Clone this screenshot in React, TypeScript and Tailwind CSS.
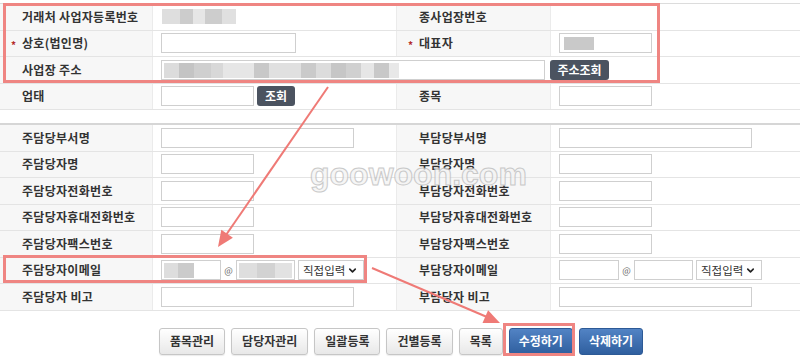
import React from "react";
import { ChevronDown } from "lucide-react";

type Seg = [number, string];

const addrBlur: Seg[] = [
  [15, "#dcdcdc"], [15, "#c4c4c4"], [17, "#cfcfcf"], [12, "#d8d8d8"], [31, "#e6e6e6"],
  [15, "#c8c8c8"], [32, "#e0e0e0"], [15, "#cacaca"], [15, "#dcdcdc"], [15, "#c6c6c6"],
  [15, "#d0d0d0"], [13, "#e6e6e6"], [15, "#c8c8c8"], [10, "#e8e8e8"],
];
const bizBlur: Seg[] = [[18, "#dedede"], [13, "#cccccc"], [12, "#e6e6e6"], [17, "#cdcdcd"], [14, "#e0e0e0"]];
const mail1Blur: Seg[] = [[14, "#dddddd"], [16, "#cbcbcb"]];
const mail2Blur: Seg[] = [[18, "#dedede"], [18, "#d2d2d2"], [17, "#e2e2e2"]];

function Blur({ segs, className = "" }: { segs: Seg[]; className?: string }) {
  return (
    <div className={`flex ${className}`}>
      {segs.map(([w, c], i) => (
        <div key={i} style={{ width: w, background: c }} />
      ))}
    </div>
  );
}

const labelCls =
  "relative shrink-0 flex items-center bg-[#f7f7f7] text-[12px] font-bold text-[#333] tracking-[0.3px] border-r border-[#ebebeb]";

function Label({ text, star, right }: { text: string; star?: boolean; right?: boolean }) {
  return (
    <div className={`${labelCls} ${right ? "w-[154px] pl-[22px]" : "w-[153px] pl-[22px]"}`}>
      {star && <span className="absolute left-[11px] top-[9px] text-[10px] leading-none text-[#b42a2a]">*</span>}
      {text}
    </div>
  );
}

function Box({ w, children }: { w: string; children?: React.ReactNode }) {
  return <div className={`relative h-[20px] shrink-0 border border-[#cfcfcf] bg-white ${w}`}>{children}</div>;
}

function Row({ children }: { children: React.ReactNode }) {
  return <div className="flex h-[26.5px] border-b border-[#e4e4e4]">{children}</div>;
}

function Val({ children, right }: { children?: React.ReactNode; right?: boolean }) {
  return (
    <div className={`flex items-center pl-[8px] ${right ? "flex-1" : "w-[244px] shrink-0 border-r border-[#ebebeb]"}`}>
      {children}
    </div>
  );
}

function DarkBtn({ text, w }: { text: string; w: string }) {
  return (
    <div className={`flex h-[20px] items-center justify-center rounded-[3px] bg-[#4b5360] text-[12px] font-bold text-white ${w}`}>
      {text}
    </div>
  );
}

function Select() {
  return (
    <div className="ml-[3px] flex h-[20px] w-[66px] items-center justify-between border border-[#cfcfcf] bg-white pl-[4px] pr-[5px] text-[11.5px] text-[#333]">
      <span>직접입력</span>
      <ChevronDown size={11} strokeWidth={3.5} className="text-[#222]" />
    </div>
  );
}

function Mail() {
  return (
    <div className="flex items-center">
      <Box w="w-[60px]" />
      <span className="w-[15px] text-center text-[9px] text-[#666]">@</span>
      <Box w="w-[59px]" />
      <Select />
    </div>
  );
}

function GrayBtn({ text }: { text: string }) {
  return (
    <div className="flex h-[27px] items-center rounded-[3px] border border-[#c6c6c6] bg-gradient-to-b from-white to-[#e8e8e8] px-[10px] text-[12px] font-bold text-[#333] shadow-[0_1px_1px_rgba(0,0,0,0.08)]">
      {text}
    </div>
  );
}

function BlueBtn({ text }: { text: string }) {
  return (
    <div className="flex h-[27px] items-center rounded-[3px] border border-[#2d5a96] bg-gradient-to-b from-[#5283c4] to-[#2f5f9f] px-[9px] text-[12px] font-bold text-white">
      {text}
    </div>
  );
}

export default function App() {
  return (
    <div className="relative h-[364px] w-[800px] overflow-hidden bg-white font-['Noto_Sans_CJK_KR','Noto_Sans',sans-serif]">
      {/* 기본 정보 */}
      <div className="mt-[3px] border-t border-[#dcdcdc]">
        <Row>
          <Label text="거래처 사업자등록번호" />
          <Val>
            <Blur segs={bizBlur} className="h-[15px] ml-[1px]" />
          </Val>
          <Label text="종사업장번호" right />
          <Val right />
        </Row>
        <Row>
          <Label text="상호(법인명)" star />
          <Val>
            <Box w="w-[135px]" />
          </Val>
          <Label text="대표자" star right />
          <Val right>
            <Box w="w-[93px]">
              <div className="absolute left-[4px] top-[3px] h-[13px] w-[30px] bg-[#c9c9c9]" />
            </Box>
          </Val>
        </Row>
        <Row>
          <Label text="사업장 주소" />
          <div className="flex flex-1 items-center pl-[8px]">
            <Box w="w-[384px]">
              <Blur segs={addrBlur} className="absolute left-[2px] top-[2px] h-[15px]" />
            </Box>
            <DarkBtn text="주소조회" w="ml-[5px] w-[59px]" />
          </div>
        </Row>
        <Row>
          <Label text="업태" />
          <Val>
            <Box w="w-[93px]" />
            <DarkBtn text="조회" w="ml-[3px] w-[38px]" />
          </Val>
          <Label text="종목" right />
          <Val right>
            <Box w="w-[93px]" />
          </Val>
        </Row>
      </div>

      {/* 담당자 정보 */}
      <div className="mt-[13px] border-t-2 border-[#d6d6d6]">
        <Row>
          <Label text="주담당부서명" />
          <Val>
            <Box w="w-[193px]" />
          </Val>
          <Label text="부담당부서명" right />
          <Val right>
            <Box w="w-[193px]" />
          </Val>
        </Row>
        {[
          ["주담당자명", "부담당자명"],
          ["주담당자전화번호", "부담당자전화번호"],
          ["주담당자휴대전화번호", "부담당자휴대전화번호"],
          ["주담당자팩스번호", "부담당자팩스번호"],
        ].map(([a, b]) => (
          <Row key={a}>
            <Label text={a} />
            <Val>
              <Box w="w-[93px]" />
            </Val>
            <Label text={b} right />
            <Val right>
              <Box w="w-[93px]" />
            </Val>
          </Row>
        ))}
        <Row>
          <Label text="주담당자이메일" />
          <Val>
            <div className="flex items-center">
              <Box w="w-[60px]">
                <Blur segs={mail1Blur} className="absolute left-[2px] top-[2px] h-[15px]" />
              </Box>
              <span className="w-[15px] text-center text-[9px] text-[#666]">@</span>
              <Box w="w-[59px]">
                <Blur segs={mail2Blur} className="absolute left-[2px] top-[2px] h-[15px]" />
              </Box>
              <Select />
            </div>
          </Val>
          <Label text="부담당자이메일" right />
          <Val right>
            <Mail />
          </Val>
        </Row>
        <Row>
          <Label text="주담당자 비고" />
          <Val>
            <Box w="w-[193px]" />
          </Val>
          <Label text="부담당자 비고" right />
          <Val right>
            <Box w="w-[193px]" />
          </Val>
        </Row>
      </div>

      {/* 버튼 */}
      <div className="mt-[17px] flex justify-center gap-[6px] pl-[2px]">
        <GrayBtn text="품목관리" />
        <GrayBtn text="담당자관리" />
        <GrayBtn text="일괄등록" />
        <GrayBtn text="건별등록" />
        <GrayBtn text="목록" />
        <BlueBtn text="수정하기" />
        <BlueBtn text="삭제하기" />
      </div>

      {/* watermark */}
      <div className="pointer-events-none absolute left-[310px] top-[158px] font-['Liberation_Sans',sans-serif] text-[32px] font-bold leading-none text-[#f4f4f4] opacity-80 [-webkit-text-stroke:1px_#bdbdbd]">
        goowoon.com
      </div>

      {/* highlight boxes */}
      <div className="pointer-events-none absolute left-[3px] top-[3px] h-[80px] w-[657px] border-[3px] border-[#ef8582]" />
      <div className="pointer-events-none absolute left-[3px] top-[255px] h-[28px] w-[364px] border-[3px] border-[#ef8582]" />
      <div className="pointer-events-none absolute left-[503px] top-[323px] h-[33px] w-[72px] border-[3px] border-[#ef8582]" />

      {/* arrows */}
      <svg className="pointer-events-none absolute inset-0" width="800" height="364" viewBox="0 0 800 364">
        <line x1="328" y1="87" x2="226" y2="235" stroke="#ef7a76" strokeWidth="2" />
        <polygon points="218,247 232.9,237.8 221.3,229.8" fill="#ef7a76" />
        <line x1="372" y1="268" x2="487" y2="317" stroke="#ef7a76" strokeWidth="2" />
        <polygon points="500,323 482.5,323.1 488.1,310.3" fill="#ef7a76" />
      </svg>
    </div>
  );
}
